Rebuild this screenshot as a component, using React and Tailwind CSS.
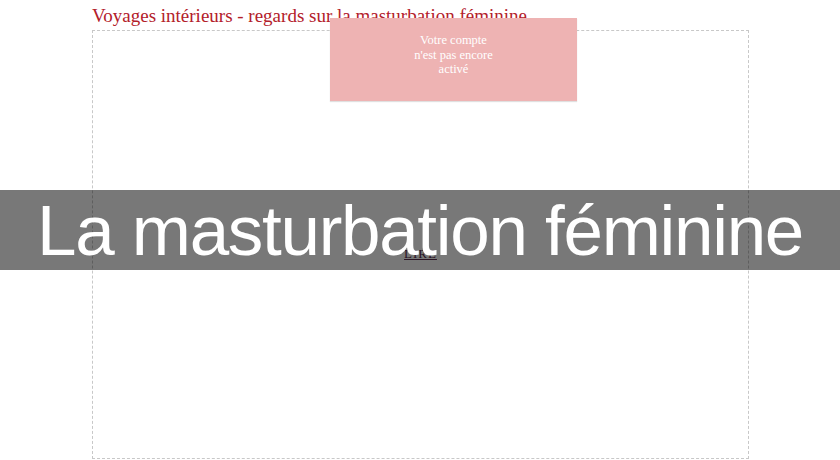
import React from "react";

const App = () => {
  return (
    <div className="relative w-[840px] h-[460px] bg-white overflow-hidden">
      {/* page */}
      <div className="pl-[92px] pt-[4px]">
        <h1 className="text-[19px] leading-[23px] text-[#b3202a] font-['Liberation_Serif',serif]">
          Voyages intérieurs - regards sur la masturbation féminine
        </h1>
        <div className="mt-[3px] w-[657px] h-[429px] border border-dashed border-[#c8c8c8] flex flex-col items-center pt-[216px]">
          <a href="#" className="text-[13px] leading-[13px] tracking-[1px] text-[#5b2d4f] underline font-['Liberation_Serif',serif]">
            LIRE
          </a>
        </div>
      </div>

      {/* pink notice */}
      <div className="absolute left-[330px] top-[18px] w-[247px] h-[83px] bg-[#eeb3b3] shadow-[0_1px_1px_rgba(0,0,0,0.12)] pt-[15px] text-center text-white text-[12.5px] leading-[14.5px] font-['Liberation_Serif',serif]">
        <div className="flex flex-col items-center">
          <span>Votre compte</span>
          <span>n'est pas encore</span>
          <span>activé</span>
        </div>
      </div>

      {/* banner */}
      <div className="absolute left-0 top-[190px] w-full h-[80px] bg-[rgba(0,0,0,0.53)] flex items-center justify-center">
        <span className="text-white text-[71px] leading-none font-['Liberation_Sans',Arial,sans-serif] tracking-[-1.3px]">
          La masturbation féminine
        </span>
      </div>
    </div>
  );
};

export default App;
